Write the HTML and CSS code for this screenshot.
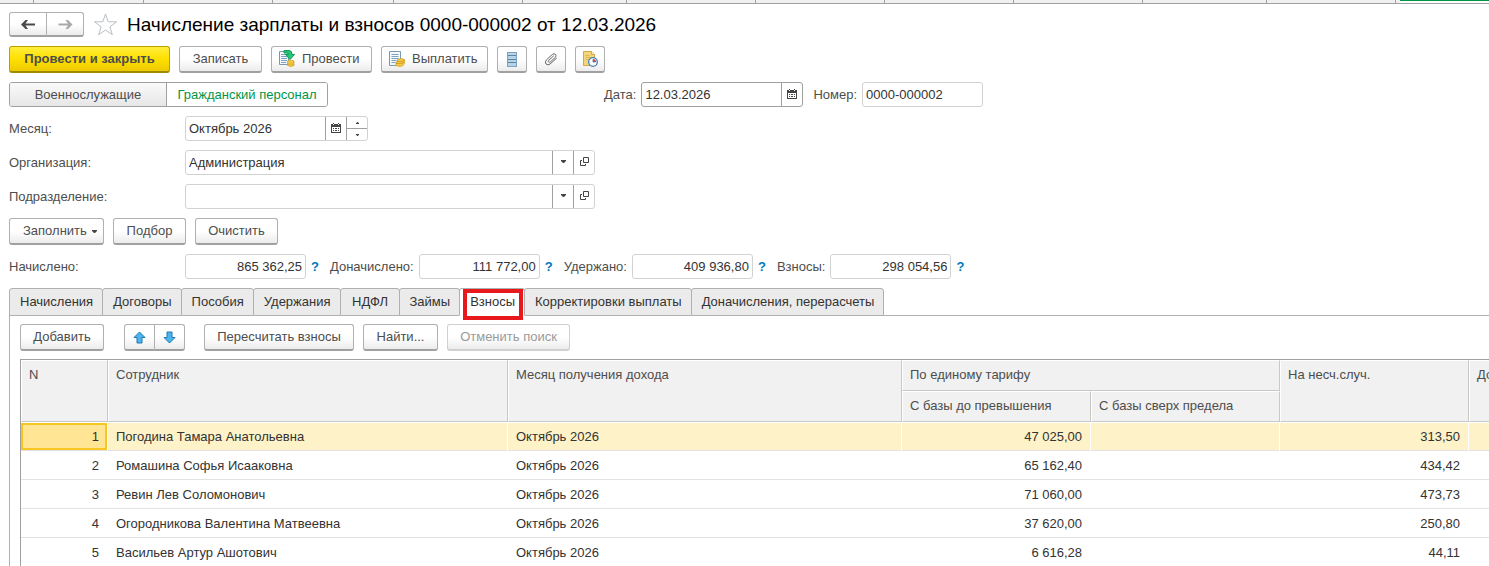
FILE: index.html
```html
<!DOCTYPE html>
<html lang="ru">
<head>
    <meta charset="UTF-8">
    <title>Начисление зарплаты и взносов</title>
    <link rel="stylesheet" href="styles.css">
</head>
<body>
<svg width="0" height="0" class="sprite">
    <symbol id="calendar" viewBox="0 0 10 10">
        <path d="M0 1h10v9H0zM2 0h1v1H2zM7 0h1v1H7z" fill="#444"/>
        <path d="M1 4h8v5H1zM2 1h1v1H2zM7 1h1v1H7z" fill="#fff"/>
        <path d="M2 5h1v1H2zM4 5h2v1H4zM7 5h1v1H7zM2 7h1v1H2zM4 7h2v1H4zM7 7h1v1H7z" fill="#444"/>
    </symbol>
    <symbol id="open" viewBox="0 0 9 9">
        <path d="M3.5.5h5v5h-5zM2 3.500H.5v5h5V7" fill="none" stroke="#444"/>
    </symbol>
    <symbol id="caret" viewBox="0 0 5 3">
        <path d="M0 0h5v1L3 3H2L0 1z" fill="#444"/>
    </symbol>
</svg>
<nav class="windows">
    <a href="#" class="windows__tab windows__tab--w34"></a>
    <a href="#" class="windows__tab windows__tab--w110"></a>
    <a href="#" class="windows__tab"></a>
    <a href="#" class="windows__tab windows__tab--w121"></a>
    <a href="#" class="windows__tab"></a>
    <a href="#" class="windows__tab windows__tab--w104"></a>
    <a href="#" class="windows__tab"></a>
    <a href="#" class="windows__tab"></a>
    <a href="#" class="windows__tab"></a>
    <a href="#" class="windows__tab"></a>
    <a href="#" class="windows__tab windows__tab--w124"></a>
    <a href="#" class="windows__tab"></a>
    <a href="#" class="windows__tab windows__tab--active"></a>
</nav>
<main class="form">
    <header class="row title">
        <div class="pair">
            <button class="button title__nav" aria-label="Назад">
                <svg width="15" height="9" viewBox="0 0 15 9"><path d="M4.500 0L0 4.500 4.500 9h2.500L4.500 5.500H14V3.500H4.500L7 0z" fill="#4a4a4a"/></svg>
            </button>
            <button class="button title__nav" aria-label="Вперед">
                <svg width="15" height="9" viewBox="0 0 15 9"><path d="M10 0l4.500 4.500L10 9H7.500L10 5.500H.5v-2H10L7.500 0z" fill="#a9a9a9"/></svg>
            </button>
        </div>
        <svg class="title__star" width="25" height="23" viewBox="0 0 25 23">
            <path d="M12.500 1l2.700 7.800h8.300l-6.600 5 2.400 7.900-6.800-4.700-6.800 4.700 2.400-7.900-6.600-5h8.300z" fill="#fff" stroke="#b9bec4"/>
        </svg>
        <h1 class="title__text">Начисление зарплаты и взносов 0000-000002 от 12.03.2026</h1>
    </header>

    <div class="row">
        <button class="button button--main">Провести и закрыть</button>
        <button class="button button--save">Записать</button>
        <button class="button button--post">
            <svg width="16" height="18" viewBox="0 0 16 18">
                <path d="M.5 1.500h9v13h-9z" fill="#f5f9fc" stroke="#7b98b0"/>
                <path d="M2 4.500h5M2 6.500h6M2 8.500h6M2 10.500h6M2 12.500h5" stroke="#7ba3c4"/>
                <path d="M5 .5h5q3 0 3 4h2.500L11 9.500 6.500 4.500H9.500q0-1.500-1.500-1.500H5z" fill="#20c978" stroke="#109a55"/>
                <path d="M8.500 11q3.500-2 6.500 0v4.500q-3 2-6.500 0z" fill="#f5cd4a" stroke="#cf9a20" stroke-width=".7"/>
                <path d="M8.500 12.500q3 1.500 6.500 0M8.500 14.200q3 1.500 6.500 0" fill="none" stroke="#d9a52c" stroke-width=".7"/>
            </svg>
            Провести
        </button>
        <button class="button button--pay">
            <svg width="16" height="16" viewBox="0 0 16 16">
                <path d="M.5 .5h11v14H.5z" fill="#f5f9fc" stroke="#7b98b0"/>
                <path d="M2.500 3.500h7M2.500 5.500h7M2.500 7.500h7M2.500 9.500h5M2.500 11.500h4" stroke="#7ba3c4"/>
                <path d="M8.500 8.500q3.500-2 7 0v4l-2 2.500q-3.500 1-6.500-.5v-3.500h1.500z" fill="#f5cd4a" stroke="#cf9a20" stroke-width=".7"/>
                <path d="M8 10q4 1.500 7.500-.5M7 12.200q4 1.500 8-.7" fill="none" stroke="#c78e17" stroke-width=".8"/>
            </svg>
            Выплатить
        </button>
        <button class="button button--icon" aria-label="Список">
            <svg width="12" height="15" viewBox="0 0 12 15">
                <path d="M1 0h10v15H1z" fill="#b9d3e5"/>
                <path d="M1 .5h10M1 3.500h10M1 7.500h10M1 10.500h10M1 14.500h10" stroke="#5586a8"/>
                <path d="M1.500.5h9v14h-9z" fill="none" stroke="#7ba3c0"/>
            </svg>
        </button>
        <button class="button button--icon" aria-label="Файлы">
            <svg width="14" height="14" viewBox="0 0 14 14" fill="none" stroke="#666" stroke-linecap="round">
                <path d="M9.500 4L4.800 8.300q-1 1.300 0 1.900.8.400 1.700-.4L11.300 5.400q1.500-1.800.2-3.100-1.400-1.200-3.200.2L2.500 7.800q-2 2.200-.5 4.200 1.900 1.800 4.100 0L12.500 6.200"/>
            </svg>
        </button>
        <button class="button button--icon" aria-label="Задать время">
            <svg width="16" height="16" viewBox="0 0 16 16">
                <path d="M1.500.5h8l3 3v11h-11z" fill="#f3d67c" stroke="#cfa94a"/>
                <path d="M9.500.5v3h3" fill="#fff3c6" stroke="#cfa94a"/>
                <path d="M3.500 4.500h4M3.500 6.500h5M3.500 8.500h3" stroke="#dcb758"/>
                <circle cx="11" cy="11" r="4.300" fill="#fff" stroke="#3f7fb8" stroke-width="1.300"/>
                <path d="M11 11V8A3 3 0 0 1 14 11z" fill="#e6463a"/>
                <path d="M11 8.500V11h2.500" fill="none" stroke="#35658f" stroke-width=".7"/>
            </svg>
        </button>
    </div>

    <div class="row">
        <div class="switch">
            <input type="radio" name="staff" id="military" class="switch__input">
            <label for="military" class="switch__label switch__label--military">Военнослужащие</label>
            <input type="radio" name="staff" id="civil" class="switch__input" checked>
            <label for="civil" class="switch__label">Гражданский персонал</label>
        </div>
        <div class="document">
            <label for="date">Дата:</label>
            <div class="field field--date field--dark">
                <input type="text" id="date" class="field__input" value="12.03.2026">
                <button class="field__button" aria-label="Выбрать дату"><svg width="10" height="10"><use href="#calendar"/></svg></button>
            </div>
            <label for="number" class="document__number">Номер:</label>
            <div class="field field--amount">
                <input type="text" id="number" class="field__input" value="0000-000002">
            </div>
        </div>
    </div>

    <div class="row">
        <label for="month" class="caption">Месяц:</label>
        <div class="field field--month">
            <input type="text" id="month" class="field__input" value="Октябрь 2026">
            <button class="field__button" aria-label="Выбрать месяц"><svg width="10" height="10"><use href="#calendar"/></svg></button>
            <div class="spin">
                <button class="spin__button" aria-label="Больше"><svg class="spin__up" width="3" height="2"><use href="#caret"/></svg></button>
                <button class="spin__button" aria-label="Меньше"><svg width="3" height="2"><use href="#caret"/></svg></button>
            </div>
        </div>
    </div>

    <div class="row">
        <label for="organization" class="caption">Организация:</label>
        <div class="field field--wide">
            <select id="organization" class="field__input">
                <option>Администрация</option>
            </select>
            <span class="field__button"><svg width="5" height="3"><use href="#caret"/></svg></span>
            <button class="field__button" aria-label="Открыть"><svg width="9" height="9"><use href="#open"/></svg></button>
        </div>
    </div>

    <div class="row">
        <label for="department" class="caption">Подразделение:</label>
        <div class="field field--wide">
            <select id="department" class="field__input">
                <option></option>
            </select>
            <span class="field__button"><svg width="5" height="3"><use href="#caret"/></svg></span>
            <button class="field__button" aria-label="Открыть"><svg width="9" height="9"><use href="#open"/></svg></button>
        </div>
    </div>

    <div class="row">
        <button class="button button--fill">Заполнить <svg width="5" height="3"><use href="#caret"/></svg></button>
        <button class="button button--pick">Подбор</button>
        <button class="button button--save">Очистить</button>
    </div>

    <div class="row totals">
        <label for="accrued" class="caption">Начислено:</label>
        <div class="field field--amount"><input type="text" id="accrued" class="field__input field__input--number" value="865 362,25"></div>
        <a href="#" class="totals__help">?</a>
        <label for="extra">Доначислено:</label>
        <div class="field field--amount"><input type="text" id="extra" class="field__input field__input--number" value="111 772,00"></div>
        <a href="#" class="totals__help">?</a>
        <label for="withheld">Удержано:</label>
        <div class="field field--amount"><input type="text" id="withheld" class="field__input field__input--number" value="409 936,80"></div>
        <a href="#" class="totals__help">?</a>
        <label for="fees">Взносы:</label>
        <div class="field field--amount"><input type="text" id="fees" class="field__input field__input--number" value="298 054,56"></div>
        <a href="#" class="totals__help">?</a>
    </div>

    <div class="tabs" role="tablist">
        <button class="tabs__item" role="tab">Начисления</button>
        <button class="tabs__item" role="tab">Договоры</button>
        <button class="tabs__item" role="tab">Пособия</button>
        <button class="tabs__item" role="tab">Удержания</button>
        <button class="tabs__item" role="tab">НДФЛ</button>
        <button class="tabs__item" role="tab">Займы</button>
        <button class="tabs__item tabs__item--active" role="tab" aria-selected="true">Взносы</button>
        <button class="tabs__item" role="tab">Корректировки выплаты</button>
        <button class="tabs__item" role="tab">Доначисления, перерасчеты</button>
    </div>

    <section class="panel">
        <div class="panel__toolbar">
            <button class="button button--add">Добавить</button>
            <div class="pair">
                <button class="button button--move" aria-label="Вверх">
                    <svg width="13" height="13" viewBox="0 0 13 13"><path d="M6.500 1l5.500 5.500H9V12H4V6.500H1z" fill="#4db4ef" stroke="#2079b0"/></svg>
                </button>
                <button class="button button--move" aria-label="Вниз">
                    <svg width="13" height="13" viewBox="0 0 13 13"><path d="M6.500 12L1 6.500h3V1h5v5.500h3z" fill="#4db4ef" stroke="#2079b0"/></svg>
                </button>
            </div>
            <button class="button button--recalc">Пересчитать взносы</button>
            <button class="button button--find">Найти...</button>
            <button class="button button--cancel" disabled>Отменить поиск</button>
        </div>
        <div class="panel__grid">
            <table class="grid">
                <colgroup>
                    <col class="grid__n">
                    <col class="grid__name">
                    <col class="grid__month">
                    <col span="4" class="grid__sum">
                </colgroup>
                <thead>
                <tr>
                    <th rowspan="2">N</th>
                    <th rowspan="2">Сотрудник</th>
                    <th rowspan="2">Месяц получения дохода</th>
                    <th colspan="2">По единому тарифу</th>
                    <th rowspan="2">На несч.случ.</th>
                    <th rowspan="2">Доп. тариф</th>
                </tr>
                <tr>
                    <th>С базы до превышения</th>
                    <th>С базы сверх предела</th>
                </tr>
                </thead>
                <tbody>
                <tr class="grid__current">
                    <td class="number">1</td>
                    <td>Погодина Тамара Анатольевна</td>
                    <td>Октябрь 2026</td>
                    <td class="number">47 025,00</td>
                    <td></td>
                    <td class="number">313,50</td>
                    <td></td>
                </tr>
                <tr>
                    <td class="number">2</td>
                    <td>Ромашина Софья Исааковна</td>
                    <td>Октябрь 2026</td>
                    <td class="number">65 162,40</td>
                    <td></td>
                    <td class="number">434,42</td>
                    <td></td>
                </tr>
                <tr>
                    <td class="number">3</td>
                    <td>Ревин Лев Соломонович</td>
                    <td>Октябрь 2026</td>
                    <td class="number">71 060,00</td>
                    <td></td>
                    <td class="number">473,73</td>
                    <td></td>
                </tr>
                <tr>
                    <td class="number">4</td>
                    <td>Огородникова Валентина Матвеевна</td>
                    <td>Октябрь 2026</td>
                    <td class="number">37 620,00</td>
                    <td></td>
                    <td class="number">250,80</td>
                    <td></td>
                </tr>
                <tr>
                    <td class="number">5</td>
                    <td>Васильев Артур Ашотович</td>
                    <td>Октябрь 2026</td>
                    <td class="number">6 616,28</td>
                    <td></td>
                    <td class="number">44,11</td>
                    <td></td>
                </tr>
                </tbody>
            </table>
        </div>
    </section>
</main>
</body>
</html>
```
FILE: styles.css
```css
* {
    box-sizing: border-box;
}
html, body {
    margin: 0;
    padding: 0;
    height: 100%;
}
body {
    display: flex;
    flex-direction: column;
    overflow: hidden;
    background-color: #fff;
    color: #4d4d4d;
    font-family: "Liberation Sans", Arial, sans-serif;
    font-size: 13px;
    line-height: 16px;
}
button, input, select {
    margin: 0;
    font: inherit;
    color: inherit;
}
svg {
    display: block;
    flex-shrink: 0;
}
.sprite {
    position: absolute;
}

/* open windows strip */
.windows {
    display: flex;
    flex-shrink: 0;
    height: 4px;
    background-color: #f0f0f0;
    border-bottom: 1px solid #a0a0a0;
}
.windows__tab {
    width: 129px;
    flex-shrink: 0;
    border-right: 1px solid #a0a0a0;
}
.windows__tab--w34 {
    width: 34px;
}
.windows__tab--w104 {
    width: 104px;
}
.windows__tab--w110 {
    width: 110px;
}
.windows__tab--w121 {
    width: 121px;
}
.windows__tab--w124 {
    width: 124px;
}
.windows__tab--active {
    flex: 1;
    margin-left: 4px;
    border-right: none;
    border-top: 1px solid #009646;
    background-color: #fff;
}

.form {
    flex: 1;
    display: flex;
    flex-direction: column;
    gap: 9px;
    padding: 8px 0 0 9px;
    min-height: 0;
}
.row {
    display: flex;
    align-items: center;
    flex-shrink: 0;
    gap: 9px;
}
.pair {
    display: flex;
}
.pair .button:first-child {
    border-top-right-radius: 0;
    border-bottom-right-radius: 0;
}
.pair .button:last-child {
    margin-left: -1px;
    border-top-left-radius: 0;
    border-bottom-left-radius: 0;
}

.button {
    display: flex;
    align-items: center;
    justify-content: center;
    height: 27px;
    padding: 0;
    border: 1px solid #b0b0b0;
    border-bottom: 2px solid #a0a0a0;
    border-radius: 3px;
    background-image: linear-gradient(to bottom, #fff 50%, #ececec 100%);
    white-space: nowrap;
}
.button:disabled {
    color: #9a9a9a;
    border-color: #d0d0d0;
}
.button--main {
    width: 161px;
    font-weight: 700;
    border-color: #bda000 #bda000 #a08a00;
    background-image: linear-gradient(to bottom, #ffee3c 0%, #ffe000 50%, #ecca00 100%);
}
.button--save {
    width: 83px;
}
.button--post {
    justify-content: flex-start;
    width: 101px;
    padding: 0 7px;
    gap: 7px;
}
.button--pay {
    justify-content: flex-start;
    width: 107px;
    padding: 0 7px;
    gap: 7px;
}
.button--icon {
    width: 30px;
}
.button--fill {
    justify-content: flex-start;
    width: 95px;
    padding: 0 0 0 13px;
    gap: 5px;
}
.button--pick {
    width: 73px;
}
.button--add {
    width: 84px;
}
.button--move {
    width: 31px;
}
.button--recalc {
    width: 150px;
}
.button--find {
    width: 75px;
}
.button--cancel {
    width: 123px;
}

.title {
    height: 25px;
}
.title__nav {
    width: 38px;
    height: 25px;
}
.title__text {
    margin: 0;
    font-size: 19px;
    font-weight: 400;
    line-height: 24px;
    color: #000;
}

.switch {
    display: flex;
    height: 25px;
    border: 1px solid #a0a0a0;
    border-radius: 3px;
    overflow: hidden;
}
.switch__input {
    position: absolute;
    opacity: 0;
}
.switch__label {
    display: flex;
    align-items: center;
    justify-content: center;
    width: 160px;
    background-image: linear-gradient(to bottom, #fafafa 0%, #e6e6e6 100%);
}
.switch__label--military {
    width: 157px;
    border-right: 1px solid #a0a0a0;
}
.switch__input:checked + .switch__label {
    background: #fff;
    color: #009646;
}

.document {
    display: flex;
    align-items: center;
    gap: 5px;
    margin-left: 267px;
}
.document__number {
    margin-left: 5px;
}
.caption {
    width: 167px;
}

.field {
    display: flex;
    height: 25px;
    border: 1px solid #d2d2d2;
    border-radius: 3px;
    background-color: #fff;
    color: #333;
    overflow: hidden;
}
.field--dark {
    border-color: #a0a0a0;
}
.field--date {
    width: 162px;
}
.field--month {
    width: 183px;
}
.field--wide {
    width: 410px;
}
.field--amount {
    width: 121px;
}
.field__input {
    flex: 1;
    width: 100%;
    min-width: 0;
    padding: 0 3px;
    border: none;
    outline: none;
    background: none;
    appearance: none;
}
.field__input--number {
    text-align: right;
}
.field__button {
    display: flex;
    align-items: center;
    justify-content: center;
    flex-shrink: 0;
    width: 21px;
    padding: 0 0 2px;
    border: none;
    border-left: 1px solid #a0a0a0;
    background: none;
}
.spin {
    display: flex;
    flex-direction: column;
    width: 21px;
    border-left: 1px solid #a0a0a0;
}
.spin__button {
    display: flex;
    flex: 1;
    align-items: center;
    justify-content: center;
    padding: 0;
    border: none;
    background: none;
}
.spin__button:first-child {
    border-bottom: 1px solid #a0a0a0;
}
.spin__up {
    transform: rotate(180deg);
}

.totals {
    gap: 5px;
}
.totals .caption {
    width: 171px;
}
.totals__help {
    width: 14px;
    color: #0078c0;
    font-weight: 700;
    text-decoration: none;
}

.tabs {
    display: flex;
    flex-shrink: 0;
    height: 28px;
    border-bottom: 1px solid #b0b0b0;
}
.tabs__item {
    height: 28px;
    min-width: 60px;
    margin-right: -1px;
    padding: 0 9px 0 10px;
    border: 1px solid #b0b0b0;
    border-radius: 3px 3px 0 0;
    background-color: #ebebeb;
    color: #333;
    white-space: nowrap;
}
.tabs__item--active {
    position: relative;
    border-bottom-color: #fff;
    background-color: #fff;
}
.tabs__item--active::after {
    content: "";
    position: absolute;
    inset: 0 1px -5px 3px;
    border: 4px solid #e8191c;
}

.panel {
    flex: 1;
    margin-top: -9px;
    padding: 8px 0 0 10px;
    border-left: 1px solid #b0b0b0;
    min-width: 0;
}
.panel__toolbar {
    display: flex;
    gap: 9px;
    margin-bottom: 8px;
}
.panel__toolbar .pair {
    margin: 0 10px 0 11px;
}
.panel__grid {
    overflow: hidden;
    border-top: 1px solid #a0a0a0;
    border-left: 1px solid #a0a0a0;
}

.grid {
    width: 1637px;
    table-layout: fixed;
    border-collapse: separate;
    border-spacing: 0;
    color: #333;
}
.grid__n {
    width: 87px;
}
.grid__name {
    width: 400px;
}
.grid__month {
    width: 394px;
}
.grid__sum {
    width: 189px;
}
.grid th {
    height: 31px;
    padding: 6px 7px;
    border: 1px solid #fff;
    border-right-color: #c8c8c8;
    border-bottom-color: #c8c8c8;
    background-color: #f1f1f1;
    color: #4d4d4d;
    font-weight: 400;
    line-height: 15px;
    text-align: left;
    vertical-align: top;
}
.grid td {
    height: 29px;
    padding: 0 8px;
    border-top: 1px solid #fff;
    border-bottom: 1px solid #e2e2e2;
    white-space: nowrap;
}
.grid .number {
    padding-right: 9px;
    text-align: right;
}
.grid__current td {
    border-right: 1px solid #fff;
    background-color: #fdf2c8;
}
.grid .grid__current .number {
    padding-right: 8px;
}
.grid__current td:first-child {
    background-color: #ffe594;
    box-shadow: inset 0 0 0 2px #f8c623;
}
```
